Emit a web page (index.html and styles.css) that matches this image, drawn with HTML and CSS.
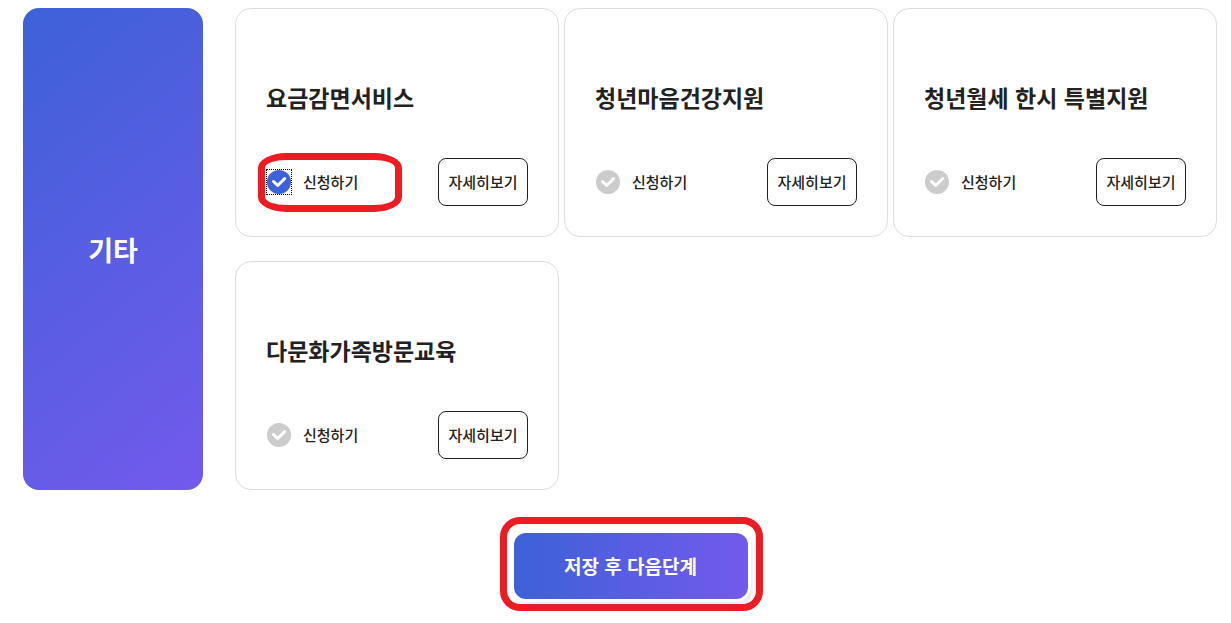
FILE: index.html
```
<!DOCTYPE html>
<html lang="ko">
<head>
  <meta charset="UTF-8">
  <title>서비스 신청</title>
  <link rel="stylesheet" href="styles.css">
</head>
<body>

<main class="service-section">
  <h2 class="category">기타</h2>

  <div class="service-list">
    <div class="service-card">
      <h3 class="service-title">요금감면서비스</h3>
      <div class="service-actions">
        <label class="apply marked">
          <span class="check">
            <input type="checkbox" name="service" value="discount" checked>
            <svg viewBox="0 0 24 24" aria-hidden="true"><path d="M6.5 11.5l4.2 4 7-7"/></svg>
          </span>
          신청하기
        </label>
        <button type="button" class="detail-btn">자세히보기</button>
      </div>
    </div>

    <div class="service-card">
      <h3 class="service-title">청년마음건강지원</h3>
      <div class="service-actions">
        <label class="apply">
          <span class="check">
            <input type="checkbox" name="service" value="mind">
            <svg viewBox="0 0 24 24" aria-hidden="true"><path d="M6.5 11.5l4.2 4 7-7"/></svg>
          </span>
          신청하기
        </label>
        <button type="button" class="detail-btn">자세히보기</button>
      </div>
    </div>

    <div class="service-card">
      <h3 class="service-title">청년월세 한시 특별지원</h3>
      <div class="service-actions">
        <label class="apply">
          <span class="check">
            <input type="checkbox" name="service" value="rent">
            <svg viewBox="0 0 24 24" aria-hidden="true"><path d="M6.5 11.5l4.2 4 7-7"/></svg>
          </span>
          신청하기
        </label>
        <button type="button" class="detail-btn">자세히보기</button>
      </div>
    </div>

    <div class="service-card">
      <h3 class="service-title">다문화가족방문교육</h3>
      <div class="service-actions">
        <label class="apply">
          <span class="check">
            <input type="checkbox" name="service" value="family">
            <svg viewBox="0 0 24 24" aria-hidden="true"><path d="M6.5 11.5l4.2 4 7-7"/></svg>
          </span>
          신청하기
        </label>
        <button type="button" class="detail-btn">자세히보기</button>
      </div>
    </div>
  </div>
</main>

<div class="submit-area">
  <div class="submit-frame">
    <button type="submit" class="submit-btn">저장 후 다음단계</button>
  </div>
</div>

</body>
</html>
```
FILE: styles.css
```
*,
*::after {
  box-sizing: border-box;
}
body {
  margin: 0;
  padding: 8px 14px 0 23px;
  background: #fff;
  color: #222;
  font-family: "Noto Sans CJK KR", "Noto Sans", sans-serif;
  font-size: 15px;
}
h2, h3 {
  margin: 0;
}
button {
  font-family: inherit;
  cursor: pointer;
}
.service-section {
  display: flex;
  gap: 32px;
}
.category {
  display: flex;
  flex: 0 0 180px;
  align-items: center;
  justify-content: center;
  border-radius: 16px;
  background: linear-gradient(140deg, #3d61d8, #735aec);
  color: #fff;
  font-size: 27px;
  font-weight: 700;
}
.service-list {
  flex: 1;
  display: grid;
  grid-template-columns: repeat(3, 1fr);
  gap: 24px 5px;
}
.service-card {
  padding: 70px 30px 30px;
  border: 1px solid #ddd;
  border-radius: 16px;
}
.service-title {
  margin-bottom: 43px;
  font-size: 23px;
  font-weight: 600;
  line-height: 36px;
}
.service-actions {
  display: flex;
  align-items: center;
  justify-content: space-between;
}
.apply {
  display: flex;
  align-items: center;
  gap: 12px;
  position: relative;
  padding-left: 1px;
  font-weight: 500;
  line-height: 24px;
  cursor: pointer;
}
.check {
  display: grid;
  width: 24px;
  height: 24px;
}
.check input,
.check svg {
  grid-area: 1 / 1;
  width: 24px;
  height: 24px;
  margin: 0;
}
.check input {
  appearance: none;
  border-radius: 50%;
  background: #ccc;
}
.check input:checked {
  background: #3d61d8;
}
.check svg {
  fill: none;
  stroke: #fff;
  stroke-width: 3;
  stroke-linecap: round;
  stroke-linejoin: round;
  pointer-events: none;
}
/* dotted focus box and red marker round the ticked service */
.marked .check {
  outline: 1px dotted #000;
}
.marked::after {
  content: "";
  position: absolute;
  top: -17px;
  left: -8px;
  width: 144px;
  height: 59px;
  border: 7px solid #ed1c24;
  border-radius: 28px / 15px;
  pointer-events: none;
}
.detail-btn {
  width: 90px;
  height: 48px;
  padding: 0 0 2px;
  border: 1px solid #222;
  border-radius: 8px;
  background: #fff;
  color: #222;
  font-size: 15px;
  font-weight: 500;
}
.submit-area {
  display: flex;
  justify-content: center;
  margin: 27px 0 0 22px;
}
.submit-frame {
  padding: 9px 8px 5px 7px;
  border: 7px solid #ed1c24;
  border-radius: 20px;
}
.submit-btn {
  display: block;
  width: 234px;
  height: 66px;
  padding: 0 0 2px;
  border: 0;
  border-radius: 12px;
  background: linear-gradient(90deg, #3d61d8, #735aec);
  box-shadow: 0 0 0 3px #fff, 3px 4px 6px rgba(80, 60, 180, 0.2);
  color: #fff;
  font-size: 19px;
  font-weight: 700;
}
```
